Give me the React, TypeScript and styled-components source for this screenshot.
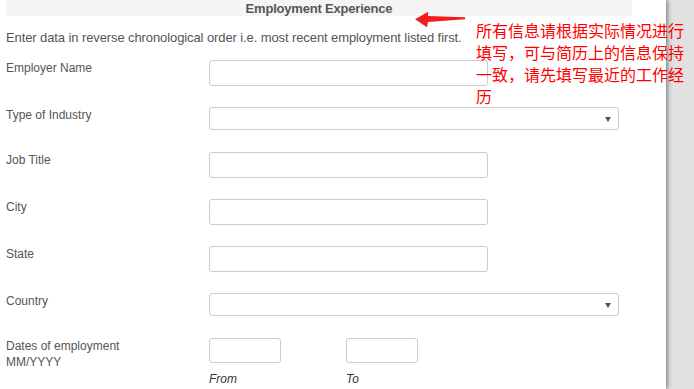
import React from "react";
import styled, { createGlobalStyle } from "styled-components";

const Global = createGlobalStyle`
  html, body {
    margin: 0;
    padding: 0;
    background: #e1e1e1;
    overflow: hidden;
  }
  body {
    font-family: "Liberation Sans", Arial, sans-serif;
  }
`;

const Page = styled.div`
  position: relative;
  width: 694px;
  height: 389px;
  overflow: hidden;
  background: #e1e1e1;
`;

const Panel = styled.div`
  width: 666px;
  height: 389px;
  box-sizing: border-box;
  background: #ffffff;
  padding: 0 34px 0 6px;
  box-shadow: 1px 0 5px rgba(0, 0, 0, 0.55);
`;

const SectionBar = styled.div`
  height: 16px;
  background: #f5f5f5;
  text-align: center;
  font-weight: bold;
  font-size: 13px;
  line-height: 17px;
  letter-spacing: -0.2px;
  color: #555555;
`;

const Intro = styled.p`
  margin: 13px 0 13px;
  font-size: 13px;
  line-height: 18px;
  letter-spacing: -0.1px;
  color: #555555;
`;

const Row = styled.div<{ $select?: boolean }>`
  display: grid;
  grid-template-columns: 203px 1fr;
  align-items: start;
  padding-bottom: ${(p) => (p.$select ? 22 : 21)}px;
`;

const Label = styled.div`
  font-size: 12px;
  line-height: 16px;
  color: #555555;
`;

const TextBox = styled.div<{ $w: number }>`
  width: ${(p) => p.$w}px;
  height: 26px;
  box-sizing: border-box;
  border: 1px solid #cccccc;
  border-radius: 3px;
  background: #fff;
`;

const SelectBox = styled.div`
  width: 410px;
  height: 23px;
  box-sizing: border-box;
  border: 1px solid #cccccc;
  border-radius: 3px;
  background: #fff;
  display: flex;
  align-items: center;
  justify-content: flex-end;
  padding-right: 7px;
`;

const Caret = styled.span`
  width: 0;
  height: 0;
  border-left: 3px solid transparent;
  border-right: 3px solid transparent;
  border-top: 5px solid #555555;
  margin-top: 1px;
`;

const DateGroup = styled.div`
  display: flex;
`;

const DateCol = styled.div`
  width: 137px;
  display: flex;
  flex-direction: column;
`;

const DateBox = styled.div`
  width: 72px;
  height: 25px;
  box-sizing: border-box;
  border: 1px solid #cccccc;
  border-radius: 3px;
  background: #fff;
`;

const Caption = styled.div`
  margin-top: 8px;
  font-size: 12px;
  line-height: 16px;
  font-style: italic;
  color: #333333;
`;

const Note = styled.div`
  position: absolute;
  left: 476px;
  top: 19px;
  width: 212px;
  font-family: "Noto Sans CJK SC", "Microsoft YaHei", sans-serif;
  font-size: 16px;
  line-height: 22px;
  color: #ff0000;
`;

const Arrow = styled.svg`
  position: absolute;
  left: 413px;
  top: 10px;
`;

const Input = ({ w = 279 }: { w?: number }) => <TextBox $w={w} />;

const Select = () => (
  <SelectBox>
    <Caret />
  </SelectBox>
);

export default function App() {
  return (
    <>
      <Global />
      <Page>
        <Panel>
          <SectionBar>Employment Experience</SectionBar>
          <Intro>
            Enter data in reverse chronological order i.e. most recent employment listed first.
          </Intro>
          <Row>
            <Label>Employer Name</Label>
            <Input />
          </Row>
          <Row $select>
            <Label>Type of Industry</Label>
            <Select />
          </Row>
          <Row>
            <Label>Job Title</Label>
            <Input />
          </Row>
          <Row>
            <Label>City</Label>
            <Input />
          </Row>
          <Row>
            <Label>State</Label>
            <Input />
          </Row>
          <Row $select>
            <Label>Country</Label>
            <Select />
          </Row>
          <Row>
            <Label>
              Dates of employment
              <br />
              MM/YYYY
            </Label>
            <DateGroup>
              <DateCol>
                <DateBox />
                <Caption>From</Caption>
              </DateCol>
              <DateCol>
                <DateBox />
                <Caption>To</Caption>
              </DateCol>
            </DateGroup>
          </Row>
        </Panel>
        <Arrow width="54" height="20" viewBox="0 0 54 20">
          <polygon
            points="2,9.3 15.3,1.7 15,6 52,7.3 52,9.3 15,12 14,17.3"
            fill="#f51c1c"
          />
        </Arrow>
        <Note>所有信息请根据实际情况进行填写，可与简历上的信息保持一致，请先填写最近的工作经历</Note>
      </Page>
    </>
  );
}
